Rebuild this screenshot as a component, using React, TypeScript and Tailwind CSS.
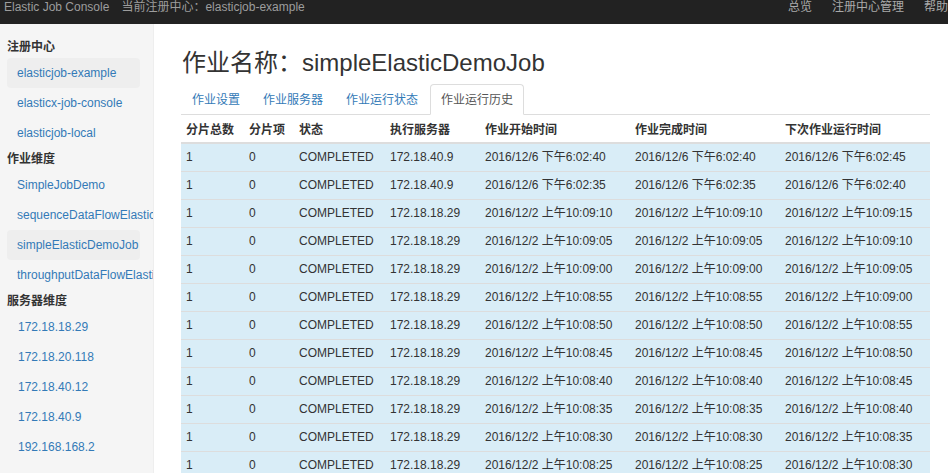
import React from "react";

const regCenters = ["elasticjob-example", "elasticx-job-console", "elasticjob-local"];
const jobs = ["SimpleJobDemo", "sequenceDataFlowElasticDemoJob", "simpleElasticDemoJob", "throughputDataFlowElasticDemoJob"];
const servers = ["172.18.18.29", "172.18.20.118", "172.18.40.12", "172.18.40.9", "192.168.168.2"];
const tabs = ["作业设置", "作业服务器", "作业运行状态", "作业运行历史"];
const columns = ["分片总数", "分片项", "状态", "执行服务器", "作业开始时间", "作业完成时间", "下次作业运行时间"];
const widths = ["w-[63px]", "w-[50px]", "w-[91px]", "w-[95px]", "w-[150px]", "w-[150px]", "w-[150px]"];

type Row = { ip: string; start: string; end: string; next: string };

const rows: Row[] = [
  { ip: "172.18.40.9", start: "2016/12/6 下午6:02:40", end: "2016/12/6 下午6:02:40", next: "2016/12/6 下午6:02:45" },
  { ip: "172.18.40.9", start: "2016/12/6 下午6:02:35", end: "2016/12/6 下午6:02:35", next: "2016/12/6 下午6:02:40" },
  { ip: "172.18.18.29", start: "2016/12/2 上午10:09:10", end: "2016/12/2 上午10:09:10", next: "2016/12/2 上午10:09:15" },
  { ip: "172.18.18.29", start: "2016/12/2 上午10:09:05", end: "2016/12/2 上午10:09:05", next: "2016/12/2 上午10:09:10" },
  { ip: "172.18.18.29", start: "2016/12/2 上午10:09:00", end: "2016/12/2 上午10:09:00", next: "2016/12/2 上午10:09:05" },
  { ip: "172.18.18.29", start: "2016/12/2 上午10:08:55", end: "2016/12/2 上午10:08:55", next: "2016/12/2 上午10:09:00" },
  { ip: "172.18.18.29", start: "2016/12/2 上午10:08:50", end: "2016/12/2 上午10:08:50", next: "2016/12/2 上午10:08:55" },
  { ip: "172.18.18.29", start: "2016/12/2 上午10:08:45", end: "2016/12/2 上午10:08:45", next: "2016/12/2 上午10:08:50" },
  { ip: "172.18.18.29", start: "2016/12/2 上午10:08:40", end: "2016/12/2 上午10:08:40", next: "2016/12/2 上午10:08:45" },
  { ip: "172.18.18.29", start: "2016/12/2 上午10:08:35", end: "2016/12/2 上午10:08:35", next: "2016/12/2 上午10:08:40" },
  { ip: "172.18.18.29", start: "2016/12/2 上午10:08:30", end: "2016/12/2 上午10:08:30", next: "2016/12/2 上午10:08:35" },
  { ip: "172.18.18.29", start: "2016/12/2 上午10:08:25", end: "2016/12/2 上午10:08:25", next: "2016/12/2 上午10:08:30" },
  { ip: "172.18.18.29", start: "2016/12/2 上午10:08:20", end: "2016/12/2 上午10:08:20", next: "2016/12/2 上午10:08:25" },
];

function SideHeading({ children }: { children: React.ReactNode }) {
  return <h3 className="h-[22px] pl-[7px] text-[12px] font-bold leading-[22px] text-[#333]">{children}</h3>;
}

function SideItem({ label, active }: { label: string; active?: boolean }) {
  return (
    <li className={`h-[30px] w-[133px] whitespace-nowrap rounded-[4px] pl-[10px] leading-[30px] text-[#337ab7] ${active ? "bg-[#eee]" : ""}`}>
      {label}
    </li>
  );
}

export default function App() {
  return (
    <div
      className="flex h-screen flex-col overflow-hidden bg-white text-[12px] text-[#333]"
      style={{ fontFamily: '"Liberation Sans", Arial, "Noto Sans CJK SC", sans-serif' }}
    >
      <header className="flex h-[24px] shrink-0 items-start overflow-hidden bg-[#222] leading-[15px] text-[#9d9d9d]">
        <span className="pl-[4px]">Elastic Job Console</span>
        <span className="pl-[12px]">当前注册中心：elasticjob-example</span>
        <nav className="ml-auto mr-[-10px] flex text-[#aaa]">
          <a className="px-[10px]">总览</a>
          <a className="px-[10px]">注册中心管理</a>
          <a className="px-[10px]">帮助</a>
        </nav>
      </header>

      <div className="flex min-h-0 flex-1">
        <aside className="w-[154px] shrink-0 overflow-hidden border-r border-[#eee] bg-[#f5f5f5] pt-[12px]">
          <SideHeading>注册中心</SideHeading>
          <ul className="pl-[7px]">
            {regCenters.map((r, i) => (
              <SideItem key={r} label={r} active={i === 0} />
            ))}
          </ul>
          <SideHeading>作业维度</SideHeading>
          <ul className="pl-[7px]">
            {jobs.map((j) => (
              <SideItem key={j} label={j} active={j === "simpleElasticDemoJob"} />
            ))}
          </ul>
          <SideHeading>服务器维度</SideHeading>
          <ul className="pl-[8px]">
            {servers.map((s) => (
              <SideItem key={s} label={s} />
            ))}
          </ul>
        </aside>

        <main className="min-w-0 flex-1 pl-[27px] pr-[18px] pt-[26px]">
          <h1 className="mb-[8px] pl-[1px] text-[24px] leading-[26px] text-[#333]">作业名称：simpleElasticDemoJob</h1>

          <ul className="flex border-b border-[#ddd]">
            {tabs.map((t, i) => {
              const active = i === tabs.length - 1;
              return (
                <li key={t} className="mr-[1px] -mb-px">
                  <a
                    className={`block h-[31px] rounded-t-[4px] border px-[10px] leading-[31px] ${
                      active ? "border-[#ddd] border-b-white bg-white text-[#555]" : "border-transparent text-[#337ab7]"
                    }`}
                  >
                    {t}
                  </a>
                </li>
              );
            })}
          </ul>

          <table className="w-[749px] table-fixed border-collapse">
            <colgroup>
              {widths.map((w, i) => (
                <col key={i} className={w} />
              ))}
            </colgroup>
            <thead>
              <tr>
                {columns.map((c) => (
                  <th key={c} className="h-[28px] whitespace-nowrap border-b-2 border-[#ddd] px-[5px] pt-[3px] text-left font-bold">
                    {c}
                  </th>
                ))}
              </tr>
            </thead>
            <tbody>
              {rows.map((r, i) => (
                <tr key={i} className="bg-[#d9edf7]">
                  {["1", "0", "COMPLETED", r.ip, r.start, r.end, r.next].map((v, j) => (
                    <td key={j} className="h-[28px] whitespace-nowrap border-t border-[#ddd] px-[5px]">
                      {v}
                    </td>
                  ))}
                </tr>
              ))}
            </tbody>
          </table>
        </main>
      </div>
    </div>
  );
}
